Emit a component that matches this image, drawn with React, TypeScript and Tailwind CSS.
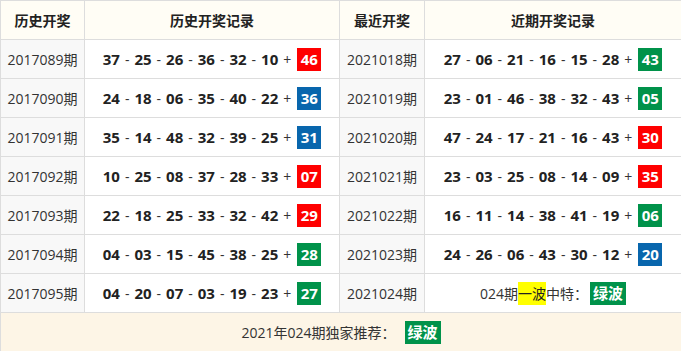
import React from "react";

type Color = "r" | "b" | "g";
const hist: [string, string[], string, Color][] = [
  ["2017089期", ["37", "25", "26", "36", "32", "10"], "46", "r"],
  ["2017090期", ["24", "18", "06", "35", "40", "22"], "36", "b"],
  ["2017091期", ["35", "14", "48", "32", "39", "25"], "31", "b"],
  ["2017092期", ["10", "25", "08", "37", "28", "33"], "07", "r"],
  ["2017093期", ["22", "18", "25", "33", "32", "42"], "29", "r"],
  ["2017094期", ["04", "03", "15", "45", "38", "25"], "28", "g"],
  ["2017095期", ["04", "20", "07", "03", "19", "23"], "27", "g"],
];
const recent: [string, string[], string, Color][] = [
  ["2021018期", ["27", "06", "21", "16", "15", "28"], "43", "g"],
  ["2021019期", ["23", "01", "46", "38", "32", "43"], "05", "g"],
  ["2021020期", ["47", "24", "17", "21", "16", "43"], "30", "r"],
  ["2021021期", ["23", "03", "25", "08", "14", "09"], "35", "r"],
  ["2021022期", ["16", "11", "14", "38", "41", "19"], "06", "g"],
  ["2021023期", ["24", "26", "06", "43", "30", "12"], "20", "b"],
];

const bg: Record<Color, string> = {
  r: "bg-[#ff0000]",
  b: "bg-[#0866ad]",
  g: "bg-[#00924a]",
};

function Balls({ nums, sp, c }: { nums: string[]; sp: string; c: Color }) {
  return (
    <div className="flex items-center justify-center">
      {nums.map((n, i) => (
        <React.Fragment key={i}>
          <span className="font-bold text-[15px] text-[#222]">{n}</span>
          {i < nums.length - 1 && <span className="mx-[5px] text-[14px]">-</span>}
        </React.Fragment>
      ))}
      <span className="ml-[5px] mr-[6px] text-[14px]">+</span>
      <span
        className={`${bg[c]} inline-flex h-[23px] w-[24px] items-center justify-center text-[15px] font-bold text-white`}
      >
        {sp}
      </span>
    </div>
  );
}

export default function App() {
  const cellA = "bg-[#f8f8f8] flex items-center justify-center h-[38px] text-[14px] text-[#333]";
  const cellB = "bg-white flex items-center justify-center h-[38px]";
  const head = "bg-[#fffdf5] flex items-center justify-center h-[38px] text-[14px] font-bold text-[#222]";
  return (
    <div
      className="w-[681px] h-[351px] overflow-hidden bg-[#dddddd] pl-px pt-px text-[#333]"
      style={{ fontFamily: '"Open Sans", "Noto Sans CJK SC", sans-serif' }}
    >
      <div className="grid grid-cols-[83px_254px_84px_256px] gap-px">
        <div className={head}>历史开奖</div>
        <div className={head}>历史开奖记录</div>
        <div className={head}>最近开奖</div>
        <div className={head}>近期开奖记录</div>
        {hist.map((h, i) => (
          <React.Fragment key={i}>
            <div className={cellA}>{h[0]}</div>
            <div className={cellB}>
              <Balls nums={h[1]} sp={h[2]} c={h[3]} />
            </div>
            <div className={cellA}>{i < 6 ? recent[i][0] : "2021024期"}</div>
            <div className={cellB}>
              {i < 6 ? (
                <Balls nums={recent[i][1]} sp={recent[i][2]} c={recent[i][3]} />
              ) : (
                <div className="flex items-center text-[14px] text-[#333]">
                  <span>024期</span>
                  <span className="bg-[#ffff00] text-[#222] h-[23px] flex items-center">一波</span>
                  <span>中特：</span>
                  <span className="bg-[#00924a] ml-[2px] inline-flex h-[23px] px-[3px] items-center font-bold text-[15px] text-white">
                    绿波
                  </span>
                </div>
              )}
            </div>
          </React.Fragment>
        ))}
        <div className="col-span-4 bg-[#fdf5e6] h-[38px] flex items-center justify-center text-[14px] text-[#333]">
          <span>2021年024期独家推荐：</span>
          <span className="bg-[#00924a] ml-[9px] inline-flex h-[23px] px-[3px] items-center font-bold text-[15px] text-white">
            绿波
          </span>
        </div>
      </div>
    </div>
  );
}
